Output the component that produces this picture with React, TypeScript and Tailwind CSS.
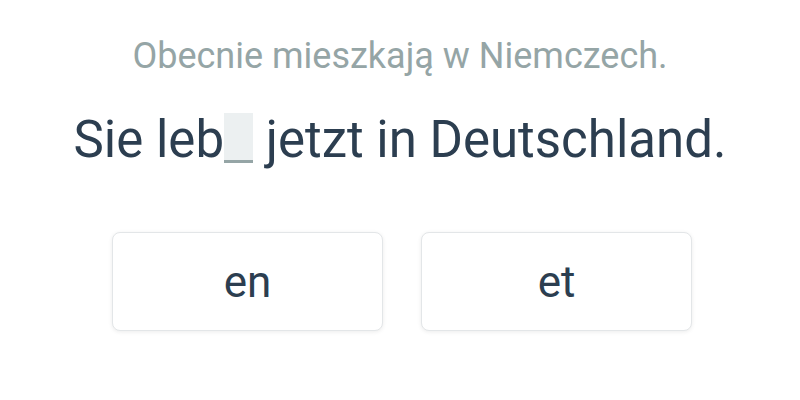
export default function App() {
  return (
    <div
      className="w-[800px] h-[400px] bg-white flex flex-col items-center text-[#2c3e50]"
      style={{ fontFamily: "Roboto, 'Noto Sans', sans-serif" }}
    >
      <p className="mt-[34px] text-[36px] leading-[44px] text-[#95a5a6]">
        Obecnie mieszkają w Niemczech.
      </p>
      <p className="mt-[32px] text-[51px] leading-[60px]">
        Sie leb
        <span className="inline-block align-[-6px] w-[29px] h-[50px] bg-[#ecf0f1] border-b-[3px] border-[#95a5a6]" />{" "}
        jetzt in Deutschland.
      </p>
      <div className="mt-[62px] ml-[4px] flex gap-[38px]">
        <button className="w-[271px] h-[99px] rounded-[8px] border border-[#e3e6e8] bg-white shadow-[0_1px_4px_rgba(0,0,0,0.08)] text-[44px]">
          en
        </button>
        <button className="w-[271px] h-[99px] rounded-[8px] border border-[#e3e6e8] bg-white shadow-[0_1px_4px_rgba(0,0,0,0.08)] text-[44px]">
          et
        </button>
      </div>
    </div>
  );
}
